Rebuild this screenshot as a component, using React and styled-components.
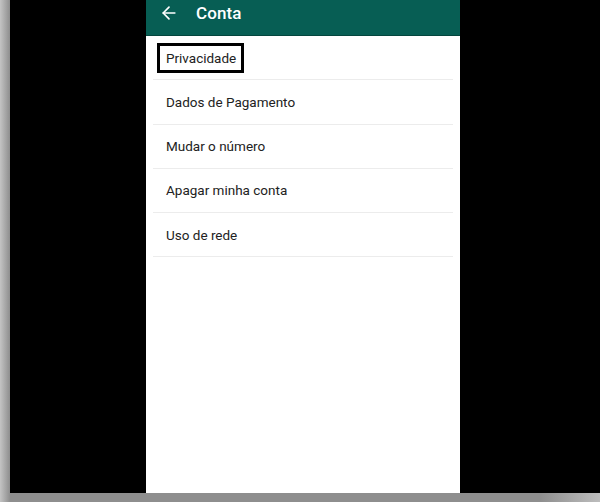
import React from 'react'
import styled, { createGlobalStyle } from 'styled-components'
import { ArrowLeft } from 'lucide-react'

const GlobalStyle = createGlobalStyle`
  html, body { margin: 0; padding: 0; }
  body {
    width: 600px;
    height: 502px;
    overflow: hidden;
    font-family: Roboto, "Noto Sans", Arial, sans-serif;
  }
`

const Frame = styled.div`
  width: 600px;
  height: 502px;
  box-sizing: border-box;
  padding: 0 0 9px 10px;
  background: linear-gradient(90deg, #c4c4c4 0px, #8e8e8e 10px, #8e8e8e 90%, #bdbdbd 100%);
`

const Backdrop = styled.div`
  height: 100%;
  background: #000;
  display: flex;
  padding-left: 136px;
`

const Screen = styled.div`
  width: 314px;
  height: 100%;
  background: #fff;
  display: flex;
  flex-direction: column;
`

const Toolbar = styled.header`
  height: 35px;
  flex-shrink: 0;
  display: flex;
  align-items: center;
  gap: 17px;
  padding-left: 13px;
  background: #075e54;
  color: #fff;
  border-bottom: 1px solid #04463e;
`

const BackButton = styled.span`
  display: flex;
  align-items: center;
  margin-top: -9px;
`

const Title = styled.h1`
  margin: -9px 0 0;
  font-size: 17px;
  font-weight: 500;
  letter-spacing: 0.1px;
`

const List = styled.ul`
  list-style: none;
  margin: 0 7px;
  padding: 0;
`

const Row = styled.li`
  height: 43.25px;
  display: flex;
  align-items: center;
  padding-left: 13px;
  border-bottom: 1px solid #ececec;
  font-size: 13.5px;
  color: #222;
`

const Highlight = styled.span`
  margin-left: -9px;
  padding: 0 5px 0 6px;
  line-height: 24px;
  border: 3px solid #000;
`

const items = ['Dados de Pagamento', 'Mudar o número', 'Apagar minha conta', 'Uso de rede']

export default function App() {
  return (
    <>
      <GlobalStyle />
      <Frame>
        <Backdrop>
          <Screen>
            <Toolbar>
              <BackButton>
                <ArrowLeft size={20} strokeWidth={2} color='#fff' />
              </BackButton>
              <Title>Conta</Title>
            </Toolbar>
            <List>
              <Row>
                <Highlight>Privacidade</Highlight>
              </Row>
              {items.map(label => (
                <Row key={label}>{label}</Row>
              ))}
            </List>
          </Screen>
        </Backdrop>
      </Frame>
    </>
  )
}
